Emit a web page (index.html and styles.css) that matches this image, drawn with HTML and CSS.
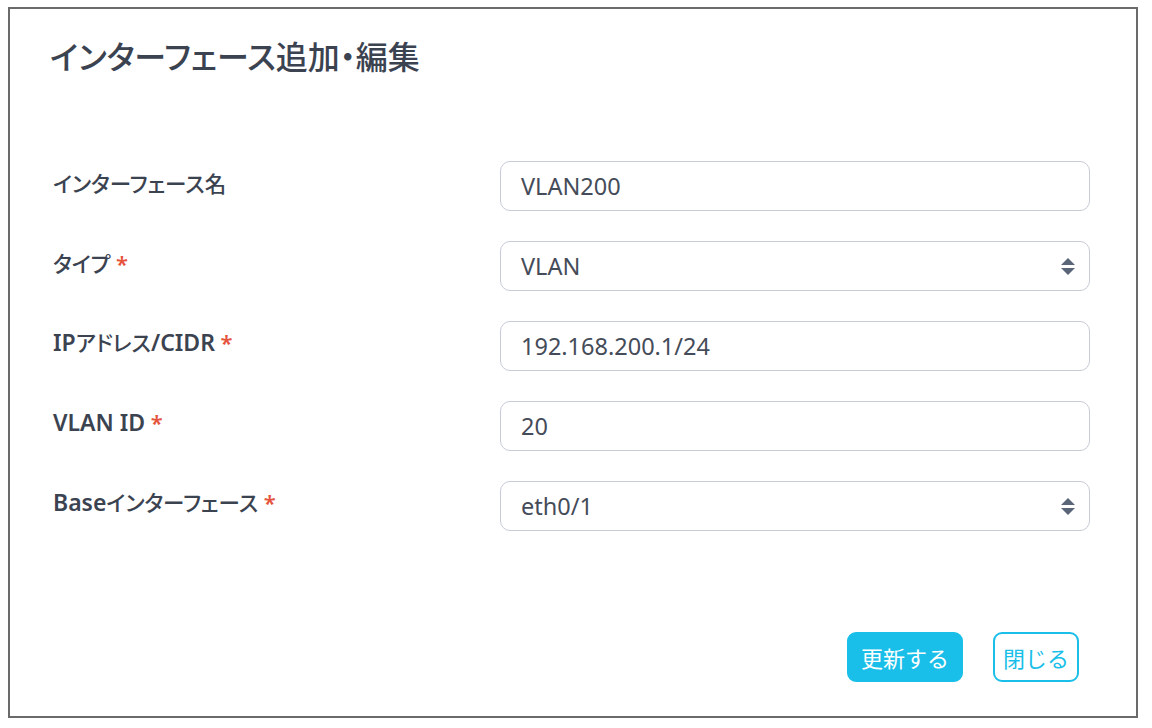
FILE: index.html
```html
<!DOCTYPE html>
<html lang="ja">
<head>
<meta charset="utf-8">
<title>インターフェース追加・編集</title>
<link rel="stylesheet" href="styles.css">
</head>
<body>
<div class="dialog">
  <h1 class="title">インターフェース追加・編集</h1>
  <form class="form">
    <div class="row">
      <label class="label">インターフェース名</label>
      <div class="field">VLAN200</div>
    </div>
    <div class="row">
      <label class="label">タイプ <span class="req">*</span></label>
      <div class="field select">VLAN
        <svg class="arrows" width="14" height="17" viewBox="0 0 14 17"><path d="M7 0 L14 7 L0 7 Z" fill="#5b6578"/><path d="M0 10 L14 10 L7 17 Z" fill="#5b6578"/></svg>
      </div>
    </div>
    <div class="row">
      <label class="label"><span class="en">IP</span>アドレス<span class="en">/CIDR</span> <span class="req">*</span></label>
      <div class="field">192.168.200.1/24</div>
    </div>
    <div class="row">
      <label class="label"><span class="en">VLAN ID</span> <span class="req">*</span></label>
      <div class="field">20</div>
    </div>
    <div class="row">
      <label class="label"><span class="en">Base</span>インターフェース <span class="req">*</span></label>
      <div class="field select">eth0/1
        <svg class="arrows" width="14" height="17" viewBox="0 0 14 17"><path d="M7 0 L14 7 L0 7 Z" fill="#5b6578"/><path d="M0 10 L14 10 L7 17 Z" fill="#5b6578"/></svg>
      </div>
    </div>
  </form>
  <div class="footer">
    <button class="btn primary" type="button">更新する</button>
    <button class="btn outline" type="button">閉じる</button>
  </div>
</div>
</body>
</html>
```
FILE: styles.css
```css
html, body {
  margin: 0;
  padding: 0;
  background: #ffffff;
}
body {
  font-family: "Noto Sans", "Noto Sans CJK JP", sans-serif;
  color: #3b4351;
}
.dialog {
  box-sizing: border-box;
  margin: 7px 0 0 8px;
  width: 1130px;
  height: 711px;
  border: 2px solid #6a6a6a;
  padding: 26px 46px 0 40px;
  display: flex;
  flex-direction: column;
}
.title {
  margin: 0;
  font-size: 32px;
  line-height: 44px;
  font-weight: 500;
  font-feature-settings: "palt";
  color: #3b4351;
}
.form {
  margin-top: 82px;
  display: flex;
  flex-direction: column;
  gap: 30px;
}
.row {
  display: grid;
  grid-template-columns: 450px 1fr;
  align-items: center;
  height: 50px;
}
.label {
  padding-left: 3px;
  padding-bottom: 8px;
  font-size: 21.5px;
  font-weight: 500;
  font-feature-settings: "palt";
  color: #3b4351;
  white-space: nowrap;
}
.en {
  font-size: 23px;
  font-weight: 600;
}
.req {
  color: #e5533d;
  font-weight: 600;
  font-size: 22px;
}
.field {
  box-sizing: border-box;
  height: 50px;
  border: 1.5px solid #c6cbd6;
  border-radius: 10px;
  padding: 0 20px;
  display: flex;
  align-items: center;
  font-size: 23.5px;
  color: #454c59;
}
.select {
  justify-content: space-between;
  padding-right: 14px;
}
.arrows {
  display: block;
}
.footer {
  margin-top: 101px;
  display: flex;
  justify-content: flex-end;
  gap: 30px;
  padding-right: 11px;
}
.btn {
  box-sizing: border-box;
  height: 50px;
  border-radius: 9px;
  font-family: "Noto Sans CJK JP", sans-serif;
  font-size: 22px;
  padding: 0;
  white-space: nowrap;
  cursor: pointer;
}
.primary {
  width: 116px;
  background: #19bfe9;
  border: 2px solid #19bfe9;
  color: #ffffff;
}
.outline {
  width: 86px;
  background: #ffffff;
  border: 2px solid #19bfe9;
  color: #19bfe9;
}
```
